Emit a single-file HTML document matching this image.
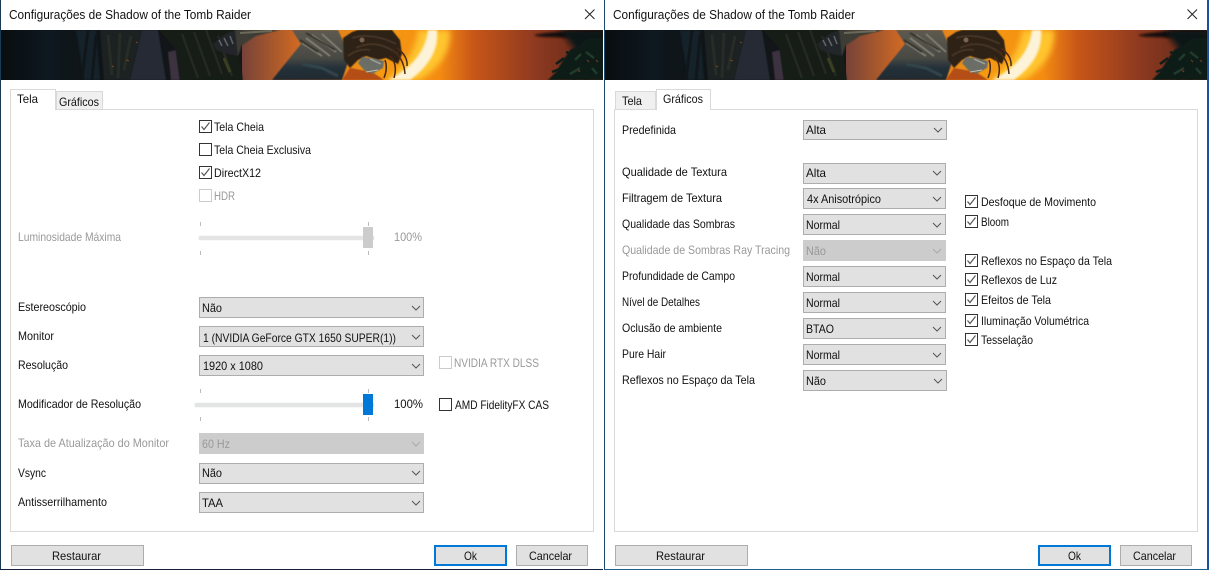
<!DOCTYPE html>
<html>
<head>
<meta charset="utf-8">
<title>Configurações de Shadow of the Tomb Raider</title>
<style>
html,body{margin:0;padding:0;width:1210px;height:572px;overflow:hidden;background:#fff}
svg{display:block}
text{font-family:"Liberation Sans",sans-serif;font-size:12px;fill:#111}
.g{fill:#999}
.c{fill:#e1e1e1;stroke:#adadad}
.d{fill:#ccc;stroke:#ccc}
</style>
</head>
<body>
<svg width="1210" height="572" viewBox="0 0 1210 572" xmlns="http://www.w3.org/2000/svg">
<defs>
<linearGradient id="sky" gradientUnits="userSpaceOnUse" x1="238" x2="603" y1="0" y2="0">
<stop offset="0" stop-color="#70403a"/><stop offset=".17" stop-color="#d26a22"/><stop offset=".38" stop-color="#f59a12"/><stop offset=".55" stop-color="#f58c12"/><stop offset=".645" stop-color="#c85618"/><stop offset=".81" stop-color="#8f3a20"/><stop offset="1" stop-color="#5a261a"/>
</linearGradient>
<linearGradient id="left" x1="0" x2="1" y1="0" y2="0">
<stop offset="0" stop-color="#090d0f"/><stop offset=".2" stop-color="#0e1820"/><stop offset=".35" stop-color="#0f1416"/><stop offset="1" stop-color="#14171a"/>
</linearGradient>
<linearGradient id="armg" x1="0" x2="0" y1="0" y2="1">
<stop offset="0" stop-color="#5d5a50"/><stop offset=".55" stop-color="#4a4a44"/><stop offset=".75" stop-color="#25313a"/><stop offset="1" stop-color="#1f2a30"/>
</linearGradient>
<filter id="b05" x="-10%" y="-20%" width="120%" height="140%"><feGaussianBlur stdDeviation=".6"/></filter>
<filter id="b1" x="-20%" y="-30%" width="140%" height="160%"><feGaussianBlur stdDeviation="1"/></filter>
<filter id="b2" x="-30%" y="-50%" width="160%" height="200%"><feGaussianBlur stdDeviation="3"/></filter>
<symbol id="banner" viewBox="0 0 602 50" width="602" height="50">
<g transform="translate(-1 0)">
<rect x="0" width="604" height="50" fill="url(#sky)"/>
<rect x="0" width="242" height="50" fill="url(#left)"/>
<!-- forest left -->
<path d="M76 0H96L100 50H84Z" fill="#16202c" filter="url(#b1)"/>
<path d="M88 0L82 50M96 5L92 50" stroke="#10161a" stroke-width="3" fill="none"/>
<path d="M100 0H142L130 50H104Z" fill="#1c2321" filter="url(#b05)"/>
<path d="M108 5L112 45M120 3L118 48M131 6L124 40" stroke="#282c27" stroke-width="3" fill="none"/>
<path d="M126 30l3 1M136 12l2 1M112 36l2 1" stroke="#7a4220" fill="none"/>
<path d="M142 0H158L166 50H130Z" fill="#252936" filter="url(#b05)"/>
<path d="M168 22L176 20L180 50H171Z" fill="#3e3240" filter="url(#b05)"/>
<path d="M158 0H235L243 50H180L176 20L166 8Z" fill="#191c19" filter="url(#b05)"/>
<path d="M182 4L198 48M194 2L210 46M206 0L222 44M218 6L232 46" stroke="#262822" stroke-width="2.500" fill="none"/>
<path d="M224 28l6 14" stroke="#3b3f22" stroke-width="3" fill="none"/>
<!-- glove + arm top -->
<path d="M213 14L225 4L235 0H243L241 20L238 26L228 24L216 20Z" fill="#24272a" filter="url(#b05)"/>
<path d="M219 10l3 6M224 8l4 8M230 6l3 8" stroke="#62666a" stroke-width="1.500" fill="none"/>
<path d="M235 0H280L256 6L241 16L238 26Z" fill="#3e3d34" filter="url(#b05)"/>
<path d="M240 3L272 1" stroke="#6a6a5a" stroke-width="2" fill="none"/>
<!-- arm + body -->
<path d="M272 50L301 14L292 0H338L350 26L342 50Z" fill="url(#armg)" filter="url(#b05)"/>
<path d="M306 8L330 26M312 5L336 22M302 13L322 26M322 4L342 22" stroke="#8d8a7b" stroke-width="1.500" fill="none" filter="url(#b05)"/>
<path d="M306 3L335 20M300 10L318 22" stroke="#2e2c27" stroke-width="1.500" fill="none" filter="url(#b05)"/>
<path d="M302 34L322 38L338 46" stroke="#33444c" stroke-width="3" fill="none" filter="url(#b05)"/>
<!-- shoulder under the face -->
<path d="M342 50L350 38L372 42L384 50Z" fill="#b44e18" filter="url(#b05)"/>
<!-- sun arc glow -->
<path d="M418 0H450Q452 30 420 50H385Q415 30 418 0Z" fill="#ffc52e" filter="url(#b2)"/>
<path d="M428 0H437Q440 28 410 50H388Q424 32 428 0Z" fill="#fdf3d8" filter="url(#b1)"/>
<!-- hair -->
<path d="M343 8L352 2L358 0H392L400 10L402 24L398 34L386 28L378 30L366 26L358 30L350 38L344 30Z" fill="#2e2219" filter="url(#b05)"/>
<path d="M352 8Q372 2 396 14M356 18Q376 8 398 24M348 26Q358 18 370 20" stroke="#4c3a2c" stroke-width="1.500" fill="none" filter="url(#b05)"/>
<!-- strands -->
<path d="M392 20Q404 28 405 44M390 26Q398 34 394 48M385 30Q388 38 384 48M397 18Q408 26 407 36" stroke="#4a2a16" stroke-width="1.500" fill="none"/>
<!-- face -->
<path d="M362 27L372 28L384 31L383 38L372 44L364 40L358 33Z" fill="#6b6e66" filter="url(#b05)"/>
<path d="M370 29L381 34" stroke="#a0a49c" stroke-width="1.500" fill="none"/>
<path d="M366 42L378 40" stroke="#c0c2b8" stroke-width="1"/>
<circle cx="362" cy="10" r="2.500" fill="#7a6250"/>
<!-- dark cloud -->
<path d="M534 5Q560 0 604 0V9Q570 8 550 7Q538 7 534 5Z" fill="#12100e" filter="url(#b1)"/>
<path d="M560 0H604V40H590Z" fill="#0e1413" filter="url(#b2)"/>
<!-- foliage -->
<path d="M548 50L556 42L562 32L566 26L570 20L578 16L588 8H604V50Z" fill="#0f1c18" filter="url(#b05)"/>
<path d="M556 34l8-6M552 42l10-4M574 50l2-8M586 50l3-12M566 22l6 2" stroke="#0f1c18" stroke-width="2.500" fill="none"/>
<path d="M575 30l6-6M586 22l8 6M570 44l10-6M592 38l5 6" stroke="#203a2c" stroke-width="2.500" fill="none"/>
<path d="M587 30l2 2M578 40l2 2M596 30l2 2" stroke="#7a3a28" fill="none"/>
</g>
</symbol>
<path id="chev" d="M0 0L4 4L8 0" fill="none" stroke="#555" stroke-width="1"/>
<path id="chevd" d="M0 0L4 4L8 0" fill="none" stroke="#aaa" stroke-width="1"/>
<g id="cb"><rect x=".5" y=".5" width="12" height="12" fill="#fff" stroke="#333"/></g>
<g id="cbc"><rect x=".5" y=".5" width="12" height="12" fill="#fff" stroke="#333"/><path d="M2.500 6.500L5 9.500L10.500 2.500" fill="none" stroke="#555" stroke-width="1.200"/></g>
<g id="cbd"><rect x=".5" y=".5" width="12" height="12" fill="#fff" stroke="#ccc"/></g>
</defs>

<rect x="0" y="0" width="1" height="570" fill="#173a56"/>
<rect x="604" y="0" width="1" height="570" fill="#1b4a70"/>
<rect x="1207" y="0" width="2" height="570" fill="#1a4fa0"/>
<rect x="0" y="569" width="603" height="1" fill="#141e3c"/>
<rect x="604" y="569" width="605" height="1" fill="#1a5f90"/>
<use href="#banner" x="1" y="30"/>
<use href="#banner" x="605" y="30"/>
<path d="M585 9.500L594.500 19M594.500 9.500L585 19" stroke="#222" fill="none"/>
<path d="M1187.500 9.500L1197 19M1197 9.500L1187.500 19" stroke="#222" fill="none"/>
<text x="9" y="19" style="font-size:13px" textLength="242" lengthAdjust="spacingAndGlyphs">Configurações de Shadow of the Tomb Raider</text>
<text x="613" y="19" style="font-size:13px" textLength="242" lengthAdjust="spacingAndGlyphs">Configurações de Shadow of the Tomb Raider</text>

<!-- left panel -->
<rect x="10.500" y="109.500" width="583" height="422" fill="#fff" stroke="#d9d9d9"/>
<rect x="56.500" y="91.500" width="46" height="18" fill="#f0f0f0" stroke="#d9d9d9"/>
<path d="M10.500 110V89.500H55.500V110" fill="#fff" stroke="#d9d9d9"/>
<rect x="11" y="109" width="44" height="2" fill="#fff"/>
<text x="17" y="103" textLength="21" lengthAdjust="spacingAndGlyphs">Tela</text>
<text x="59" y="106" textLength="40" lengthAdjust="spacingAndGlyphs">Gráficos</text>

<use href="#cbc" x="199" y="120"/><text x="214" y="131" textLength="50" lengthAdjust="spacingAndGlyphs">Tela Cheia</text>
<use href="#cb" x="199" y="143"/><text x="214" y="154" textLength="97" lengthAdjust="spacingAndGlyphs">Tela Cheia Exclusiva</text>
<use href="#cbc" x="199" y="166"/><text x="214" y="177" textLength="47" lengthAdjust="spacingAndGlyphs">DirectX12</text>
<use href="#cbd" x="199" y="189"/><text class="g" x="214" y="200" textLength="21" lengthAdjust="spacingAndGlyphs">HDR</text>

<text class="g" x="18" y="241" textLength="103" lengthAdjust="spacingAndGlyphs">Luminosidade Máxima</text>
<rect x="199" y="236" width="175" height="4" fill="#e4e4e4" stroke="#e8e8e8" stroke-width=".5"/>
<rect x="363" y="227" width="10" height="21" fill="#ccc"/>
<path d="M200.500 222V226M200.500 251V255M368.500 222V226M368.500 251V255" stroke="#bbb"/>
<text class="g" x="394" y="241" textLength="28" lengthAdjust="spacingAndGlyphs">100%</text>

<text x="18" y="311" textLength="68" lengthAdjust="spacingAndGlyphs">Estereoscópio</text>
<rect class="c" x="199.500" y="297.500" width="224" height="20"/><use href="#chev" x="412" y="306"/>
<text x="202" y="312" textLength="20" lengthAdjust="spacingAndGlyphs">Não</text>

<text x="18" y="340" textLength="36" lengthAdjust="spacingAndGlyphs">Monitor</text>
<rect class="c" x="199.500" y="326.500" width="224" height="20"/><use href="#chev" x="412" y="335"/>
<text x="203" y="342" textLength="193" lengthAdjust="spacingAndGlyphs">1 (NVIDIA GeForce GTX 1650 SUPER(1))</text>

<text x="18" y="369" textLength="50" lengthAdjust="spacingAndGlyphs">Resolução</text>
<rect class="c" x="199.500" y="355.500" width="224" height="20"/><use href="#chev" x="412" y="364"/>
<text x="203" y="370" textLength="60" lengthAdjust="spacingAndGlyphs">1920 x 1080</text>

<use href="#cbd" x="439" y="356"/><text class="g" x="454" y="367" textLength="85" lengthAdjust="spacingAndGlyphs">NVIDIA RTX DLSS</text>

<text x="18" y="408" textLength="123" lengthAdjust="spacingAndGlyphs">Modificador de Resolução</text>
<rect x="195" y="403" width="179" height="4" fill="#e4e4e4" stroke="#dfe3e3" stroke-width=".5"/>
<rect x="363" y="394" width="10" height="21" fill="#0078d7"/>
<path d="M200.500 389V393M200.500 417V421M368.500 389V393M368.500 417V421" stroke="#bbb"/>
<text x="394" y="408" textLength="29" lengthAdjust="spacingAndGlyphs">100%</text>
<use href="#cb" x="439" y="398"/><text x="455" y="409" textLength="94" lengthAdjust="spacingAndGlyphs">AMD FidelityFX CAS</text>

<text class="g" x="18" y="447" textLength="151" lengthAdjust="spacingAndGlyphs">Taxa de Atualização do Monitor</text>
<rect class="d" x="199.500" y="433.500" width="224" height="20"/><use href="#chevd" x="412" y="442"/>
<text class="g" x="202" y="448" textLength="28" lengthAdjust="spacingAndGlyphs">60 Hz</text>

<text x="18" y="477" textLength="28" lengthAdjust="spacingAndGlyphs">Vsync</text>
<rect class="c" x="199.500" y="463.500" width="224" height="20"/><use href="#chev" x="412" y="471"/>
<text x="202" y="477" textLength="20" lengthAdjust="spacingAndGlyphs">Não</text>

<text x="18" y="506" textLength="89" lengthAdjust="spacingAndGlyphs">Antisserrilhamento</text>
<rect class="c" x="199.500" y="492.500" width="224" height="20"/><use href="#chev" x="412" y="501"/>
<text x="202" y="507" textLength="21" lengthAdjust="spacingAndGlyphs">TAA</text>

<rect class="c" x="11.500" y="545.500" width="132" height="20"/>
<text x="52" y="560" textLength="49" lengthAdjust="spacingAndGlyphs">Restaurar</text>
<rect x="435" y="546" width="71" height="19" fill="#e1e1e1" stroke="#0078d7" stroke-width="2"/>
<text x="464" y="560" textLength="13" lengthAdjust="spacingAndGlyphs">Ok</text>
<rect class="c" x="516.500" y="545.500" width="71" height="20"/>
<text x="529" y="560" textLength="43" lengthAdjust="spacingAndGlyphs">Cancelar</text>

<!-- right panel -->
<rect x="614.500" y="109.500" width="583" height="422" fill="#fff" stroke="#d9d9d9"/>
<rect x="615.500" y="91.500" width="40" height="18" fill="#f0f0f0" stroke="#d9d9d9"/>
<path d="M656.500 110V89.500H710.500V110" fill="#fff" stroke="#d9d9d9"/>
<rect x="657" y="109" width="53" height="2" fill="#fff"/>
<text x="622" y="105" textLength="20" lengthAdjust="spacingAndGlyphs">Tela</text>
<text x="663" y="103" textLength="40" lengthAdjust="spacingAndGlyphs">Gráficos</text>

<text x="622" y="134" textLength="54" lengthAdjust="spacingAndGlyphs">Predefinida</text>
<rect class="c" x="803.500" y="120.500" width="143" height="19"/><use href="#chev" x="934" y="128"/>
<text x="806" y="134" textLength="20" lengthAdjust="spacingAndGlyphs">Alta</text>

<text x="622" y="176" textLength="105" lengthAdjust="spacingAndGlyphs">Qualidade de Textura</text>
<rect class="c" x="803.500" y="163.500" width="142" height="20"/><use href="#chev" x="933" y="171"/>
<text x="806" y="177" textLength="20" lengthAdjust="spacingAndGlyphs">Alta</text>

<text x="622" y="202" textLength="100" lengthAdjust="spacingAndGlyphs">Filtragem de Textura</text>
<rect class="c" x="803.500" y="188.500" width="142" height="20"/><use href="#chev" x="933" y="197"/>
<text x="807" y="203" textLength="74" lengthAdjust="spacingAndGlyphs">4x Anisotrópico</text>

<text x="622" y="228" textLength="113" lengthAdjust="spacingAndGlyphs">Qualidade das Sombras</text>
<rect class="c" x="803.500" y="214.500" width="142" height="20"/><use href="#chev" x="933" y="223"/>
<text x="806" y="229" textLength="34" lengthAdjust="spacingAndGlyphs">Normal</text>

<text class="g" x="622" y="254" textLength="168" lengthAdjust="spacingAndGlyphs">Qualidade de Sombras Ray Tracing</text>
<rect class="d" x="803.500" y="240.500" width="142" height="20"/><use href="#chevd" x="933" y="249"/>
<text class="g" x="806" y="255" textLength="20" lengthAdjust="spacingAndGlyphs">Não</text>

<text x="622" y="280" textLength="113" lengthAdjust="spacingAndGlyphs">Profundidade de Campo</text>
<rect class="c" x="803.500" y="266.500" width="142" height="20"/><use href="#chev" x="933" y="275"/>
<text x="806" y="281" textLength="34" lengthAdjust="spacingAndGlyphs">Normal</text>

<text x="622" y="306" textLength="78" lengthAdjust="spacingAndGlyphs">Nível de Detalhes</text>
<rect class="c" x="803.500" y="292.500" width="142" height="20"/><use href="#chev" x="933" y="301"/>
<text x="806" y="307" textLength="34" lengthAdjust="spacingAndGlyphs">Normal</text>

<text x="622" y="332" textLength="100" lengthAdjust="spacingAndGlyphs">Oclusão de ambiente</text>
<rect class="c" x="803.500" y="318.500" width="142" height="20"/><use href="#chev" x="933" y="327"/>
<text x="806" y="333" textLength="28" lengthAdjust="spacingAndGlyphs">BTAO</text>

<text x="622" y="358" textLength="44" lengthAdjust="spacingAndGlyphs">Pure Hair</text>
<rect class="c" x="803.500" y="344.500" width="142" height="20"/><use href="#chev" x="933" y="353"/>
<text x="806" y="359" textLength="34" lengthAdjust="spacingAndGlyphs">Normal</text>

<text x="622" y="384" textLength="133" lengthAdjust="spacingAndGlyphs">Reflexos no Espaço da Tela</text>
<rect class="c" x="803.500" y="370.500" width="143" height="20"/><use href="#chev" x="934" y="379"/>
<text x="806" y="385" textLength="20" lengthAdjust="spacingAndGlyphs">Não</text>

<use href="#cbc" x="965" y="195"/><text x="981" y="206" textLength="115" lengthAdjust="spacingAndGlyphs">Desfoque de Movimento</text>
<use href="#cbc" x="965" y="215"/><text x="981" y="226" textLength="28" lengthAdjust="spacingAndGlyphs">Bloom</text>
<use href="#cbc" x="965" y="254"/><text x="981" y="265" textLength="131" lengthAdjust="spacingAndGlyphs">Reflexos no Espaço da Tela</text>
<use href="#cbc" x="965" y="273"/><text x="981" y="284" textLength="76" lengthAdjust="spacingAndGlyphs">Reflexos de Luz</text>
<use href="#cbc" x="965" y="293"/><text x="981" y="304" textLength="70" lengthAdjust="spacingAndGlyphs">Efeitos de Tela</text>
<use href="#cbc" x="965" y="314"/><text x="981" y="325" textLength="108" lengthAdjust="spacingAndGlyphs">Iluminação Volumétrica</text>
<use href="#cbc" x="965" y="333"/><text x="981" y="344" textLength="52" lengthAdjust="spacingAndGlyphs">Tesselação</text>

<rect class="c" x="615.500" y="545.500" width="132" height="20"/>
<text x="656" y="560" textLength="49" lengthAdjust="spacingAndGlyphs">Restaurar</text>
<rect x="1039" y="546" width="71" height="19" fill="#e1e1e1" stroke="#0078d7" stroke-width="2"/>
<text x="1068" y="560" textLength="13" lengthAdjust="spacingAndGlyphs">Ok</text>
<rect class="c" x="1120.500" y="545.500" width="71" height="20"/>
<text x="1133" y="560" textLength="43" lengthAdjust="spacingAndGlyphs">Cancelar</text>
</svg>
</body>
</html>
